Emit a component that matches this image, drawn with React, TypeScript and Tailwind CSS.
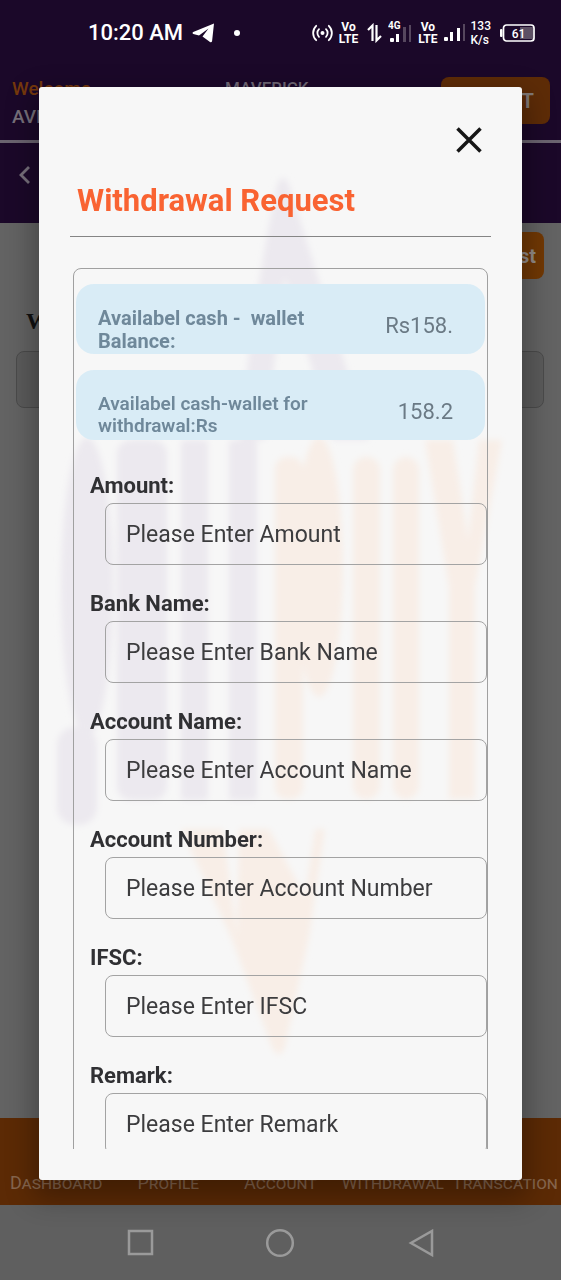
import React from "react";

const fields = [
  { id: "amount", label: "Amount" },
  { id: "bank-name", label: "Bank Name" },
  { id: "account-name", label: "Account Name" },
  { id: "account-number", label: "Account Number" },
  { id: "ifsc", label: "IFSC" },
  { id: "remark", label: "Remark" },
];

const tabs = ["Dashboard", "Profile", "Account", "Withdrawal", "Transcation"];

function VoLte() {
  return (
    <span className="flex flex-col items-center text-[12px] leading-[12px] font-bold">
      <span>Vo</span>
      <span>LTE</span>
    </span>
  );
}

function StatusBar() {
  return (
    <div className="flex h-[65px] items-center justify-between pr-[25px] pl-[88px] text-white">
      <div className="flex items-center">
        <span className="text-[22px] leading-[26px] font-medium">10:20 AM</span>
        <svg className="ml-[9px]" width="23" height="20" viewBox="0 0 23 20" fill="#fff">
          <path d="M22 .6 1.200 9q-1.400 1.200.1 2L7 12.600 16.500 5.600 10.500 13.600 18 19q1.700.700 2.100-1z" />
        </svg>
        <span className="ml-[19px] h-[6px] w-[6px] rounded-full bg-white" />
      </div>
      <div className="flex items-center">
        <svg width="21" height="18" viewBox="0 0 21 18" fill="none" stroke="#fff" strokeWidth="1.8" strokeLinecap="round">
          <circle cx="10.500" cy="9" r="2" fill="#fff" stroke="none" />
          <path d="M7 5.200a5.300 5.300 0 0 0 0 7.600M14 5.200a5.300 5.300 0 0 1 0 7.600M4.200 1.800a10 10 0 0 0 0 14.400M16.800 1.800a10 10 0 0 1 0 14.400" />
        </svg>
        <span className="ml-[6px]"><VoLte /></span>
        <svg className="ml-[9px]" width="15" height="20" viewBox="0 0 15 20" fill="none" stroke="#fff" strokeWidth="2.200">
          <path d="M5.500 18V2.500L1 7M9.500 2v15.500L14 13" />
        </svg>
        <svg className="ml-[6px]" width="24" height="24" viewBox="0 0 24 24" fill="#fff">
          <text x="0" y="8" fontFamily="Roboto, sans-serif" fontSize="10" fontWeight="700">4G</text>
          <rect x="2" y="17" width="4" height="4" rx="1" />
          <rect x="8" y="13" width="3" height="8" />
          <rect x="15" y="6" width="3" height="15" fill="#56475e" />
          <rect x="21" y="4" width="2" height="17" fill="#56475e" />
        </svg>
        <span className="ml-[6px]"><VoLte /></span>
        <svg className="ml-[6px]" width="22" height="20" viewBox="0 0 22 20" fill="#fff">
          <rect x="0" y="14" width="4" height="4" rx="1" />
          <rect x="6" y="9" width="3" height="9" />
          <rect x="13" y="5" width="3" height="13" />
          <rect x="19" y="1" width="2" height="17" fill="#56475e" />
        </svg>
        <span className="ml-[5px] flex flex-col text-[12px] leading-[14px] font-medium">
          <span>133</span>
          <span>K/s</span>
        </span>
        <svg className="ml-[9px]" width="36" height="18" viewBox="0 0 36 18">
          <rect x="0" y="5" width="2.500" height="8" rx="1" fill="#fff" />
          <rect x="20" y="3" width="13" height="12" fill="#5d5064" />
          <rect x="3.500" y="1" width="30.500" height="16" rx="3" fill="none" stroke="#fff" strokeWidth="1.700" />
          <text x="18.500" y="13.500" textAnchor="middle" fill="#fff" fontFamily="Roboto, sans-serif" fontSize="12" fontWeight="500">61</text>
        </svg>
      </div>
    </div>
  );
}

function PageBehind() {
  return (
    <div className="flex min-h-screen flex-col bg-[#636363]">
      <header className="bg-[#1b0829]">
        <StatusBar />
        <div className="flex h-[78px] items-start justify-between border-b-[3px] border-[#6b6470] pt-3 pr-[11px] pl-3">
          <div className="flex flex-col gap-1 text-[19px] leading-6 font-medium">
            <span className="text-[#76380c]">Welcome</span>
            <span className="text-[#77707b]">AVINASH</span>
          </div>
          <span className="text-[17px] leading-[22px] font-medium text-[#6f6775]">MAVERICK</span>
          <button className="h-[47px] w-[109px] rounded-lg bg-[#5e2c07] text-[20px] font-bold text-[#837b78]">LOGOUT</button>
        </div>
        <div className="h-20 pt-[22px] pl-[18px]">
          <button aria-label="Back" className="block">
            <svg width="13" height="20" viewBox="0 0 13 20" fill="none" stroke="#77707b" strokeWidth="2.800">
              <path d="M11 2 3 10l8 8" />
            </svg>
          </button>
        </div>
      </header>
      <main className="flex-1 pt-[9px] pr-[17px] pl-4">
        <div className="flex justify-end">
          <button className="h-[47px] rounded-lg bg-[#713804] px-2 text-[20px] font-bold text-[#938b87]">Withdrawal Request</button>
        </div>
        <label htmlFor="wallet" className="mt-[26px] block pl-[10px] font-[Liberation_Serif,serif] text-[24px] leading-8 font-bold text-[#111]">Wallet</label>
        <input id="wallet" className="mt-[14px] h-[57px] w-full rounded-lg border border-[#4b4b4b] bg-[#5b5b5b]" />
      </main>
      <nav className="grid h-[87px] grid-cols-5 items-end bg-[#5c2a05] pb-[10px] text-[18px] leading-6 text-[#86654d]">
        {tabs.map((tab) => (
          <a key={tab} href="#" className="flex justify-center [font-variant:small-caps]">{tab}</a>
        ))}
      </nav>
      <div className="flex h-[75px] items-center justify-around bg-[#5f5f5f] px-[70px]">
        <button aria-label="Recent apps">
          <svg width="28" height="28" viewBox="0 0 28 28" fill="none" stroke="#9a9a9a" strokeWidth="2.500">
            <rect x="3" y="2" width="23" height="23" />
          </svg>
        </button>
        <button aria-label="Home">
          <svg width="30" height="30" viewBox="0 0 30 30" fill="none" stroke="#9a9a9a" strokeWidth="2.500">
            <circle cx="15" cy="15" r="12.800" />
          </svg>
        </button>
        <button aria-label="Go back">
          <svg width="28" height="28" viewBox="0 0 28 28" fill="none" stroke="#9a9a9a" strokeWidth="2.500">
            <path d="M25 2v24L4 14z" />
          </svg>
        </button>
      </div>
    </div>
  );
}

function Watermark() {
  return (
    <svg className="pointer-events-none absolute inset-0 h-full w-full" viewBox="0 0 483 1093" preserveAspectRatio="none" aria-hidden="true">
      <defs>
        <filter id="soft" x="-10%" y="-10%" width="120%" height="120%">
          <feGaussianBlur stdDeviation="3" />
        </filter>
      </defs>
      <g filter="url(#soft)" fill="#ece9ef">
        <path d="M238 98Q244 84 250 98L330 353H294L246 190 226 353H201Q212 220 238 98z" />
        <ellipse cx="48" cy="500" rx="26" ry="150" />
        <rect x="18" y="640" width="40" height="98" rx="18" />
        <rect x="78" y="353" width="50" height="360" rx="14" />
        <rect x="142" y="353" width="27" height="360" rx="4" />
        <rect x="190" y="353" width="28" height="360" rx="4" />
      </g>
      <g filter="url(#soft)" fill="#f8eee7">
        <rect x="236" y="370" width="28" height="342" rx="12" />
        <ellipse cx="280" cy="480" rx="24" ry="130" />
        <rect x="314" y="370" width="27" height="342" rx="13" />
        <rect x="354" y="370" width="26" height="342" rx="13" />
        <rect x="410" y="490" width="26" height="222" />
        <path d="M386 353H414L436 500H410zM440 353H463L436 500H424z" />
        <path d="M142 742H184L198 850 200 742H230L266 810 276 742H286L270 850 246 960Q240 976 232 958L192 850z" />
      </g>
    </svg>
  );
}

function BalanceCards() {
  return (
    <div className="flex flex-col gap-4 px-[2px] pt-[15px]">
      <div className="flex h-[70px] justify-between rounded-[18px] bg-[#d9ecf6] pr-[32px] pl-[22px]">
        <span className="pt-[23px] text-[20px] leading-[23px] font-bold whitespace-pre text-[#6f889a]">{"Availabel cash -  wallet\nBalance:"}</span>
        <span className="pt-[29px] text-[22px] leading-[26px] text-[#6b7a85]">Rs158.</span>
      </div>
      <div className="flex h-[70px] justify-between rounded-[18px] bg-[#d9ecf6] pr-[32px] pl-[22px]">
        <span className="pt-[23px] text-[19px] leading-[22px] font-semibold whitespace-pre text-[#6f889a]">{"Availabel cash-wallet for\nwithdrawal:Rs"}</span>
        <span className="pt-[29px] text-[22px] leading-[26px] text-[#6b7a85]">158.2</span>
      </div>
    </div>
  );
}

function WithdrawalDialog() {
  return (
    <div className="fixed inset-0 flex px-[39px] pt-[87px] pb-[100px]">
      <section role="dialog" aria-labelledby="dialog-title" className="relative flex w-full flex-col rounded-[3px] bg-[#f7f7f7] p-[31px] shadow-[0_12px_28px_6px_rgba(0,0,0,0.3)]">
        <Watermark />
        <div className="relative flex min-h-0 flex-1 flex-col overflow-y-auto [scrollbar-width:none]">
          <div className="flex justify-end pt-[8px] pr-[8px]">
            <button aria-label="Close">
              <svg className="block" width="28" height="28" viewBox="0 0 28 28" stroke="#161616" strokeWidth="3.500" fill="none">
                <path d="M2.500 2.500 25.500 25.500M25.500 2.500 2.500 25.500" />
              </svg>
            </button>
          </div>
          <h1 id="dialog-title" className="mt-[29px] border-b border-[#858585] pb-[17px] pl-[7px] text-[31px] leading-9 font-bold text-[#f96332]">Withdrawal Request</h1>
          <form className="mx-[3px] mt-[31px] shrink-0 rounded-lg border border-[#a0a0a0] pb-7">
            <BalanceCards />
            <div className="flex flex-col gap-[26px] pt-[33px] pl-4">
              {fields.map((field) => (
                <div key={field.id} className="flex flex-col gap-1">
                  <label htmlFor={field.id} className="text-[22px] leading-[26px] font-bold text-[#303033]">{field.label}:</label>
                  <div className="flex pl-[15px]">
                    <input id={field.id} placeholder={`Please Enter ${field.label}`} className="h-[62px] w-full rounded-lg border border-[#a3a3a3] bg-transparent pl-5 text-[23px] text-[#3c3c3e] outline-none placeholder:text-[#3c3c3e]" />
                  </div>
                </div>
              ))}
            </div>
          </form>
        </div>
      </section>
    </div>
  );
}

export default function App() {
  return (
    <div className="font-[Roboto,sans-serif]">
      <PageBehind />
      <WithdrawalDialog />
    </div>
  );
}
